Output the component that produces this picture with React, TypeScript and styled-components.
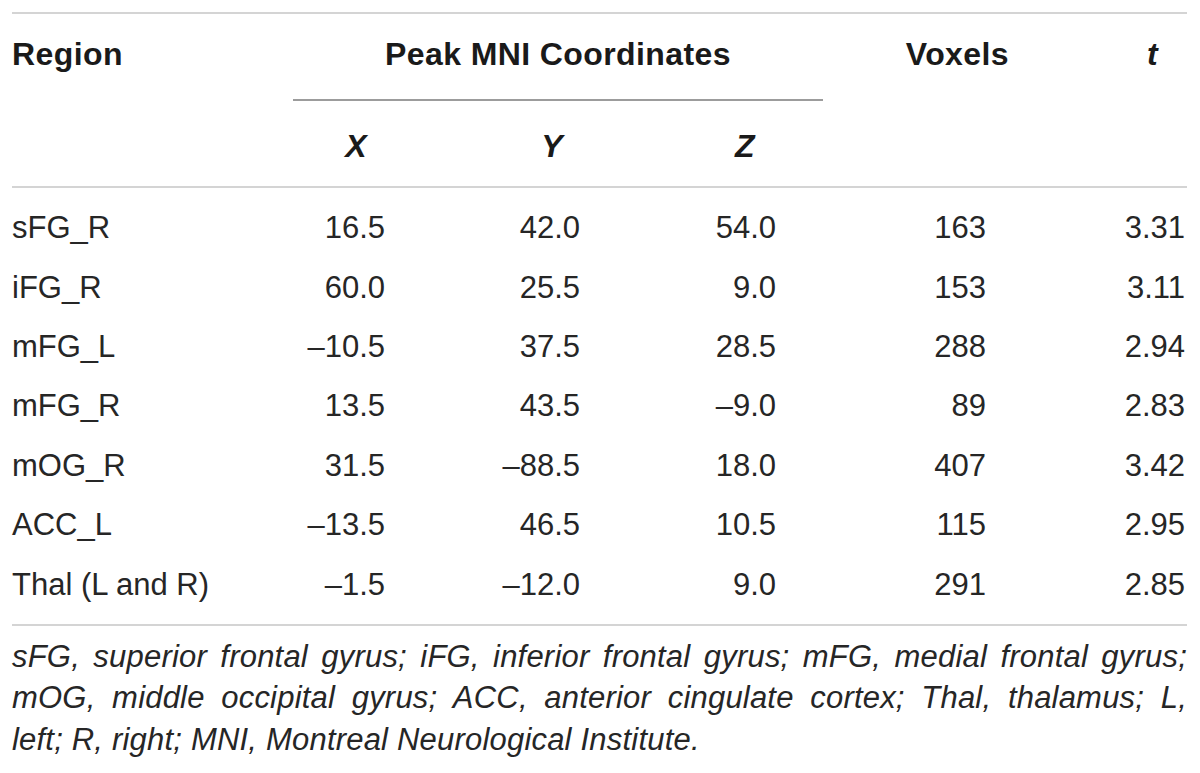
import React from "react";
import styled, { createGlobalStyle } from "styled-components";

const GlobalStyle = createGlobalStyle`
  html, body { margin: 0; padding: 0; background: #ffffff; }
  body {
    font-family: "Liberation Sans", Arial, Helvetica, sans-serif;
    color: #262626;
  }
`;

const COLS = "281px 177px 176px 177px 187px 177px";

const Page = styled.div`
  padding: 12px 0 0 12px;
  width: 1175px;
`;

const Table = styled.div`
  border-top: 2px solid #d4d4d4;
`;

const Head = styled.div`
  display: grid;
  grid-template-columns: ${COLS};
  grid-template-rows: 85px 2px 85px;
  border-bottom: 2px solid #d4d4d4;
`;

const HeadCell = styled.div<{
  $col: string;
  $row: number;
  $align?: "left" | "center" | "right";
  $pad?: number;
  $italic?: boolean;
}>`
  grid-column: ${(p) => p.$col};
  grid-row: ${(p) => p.$row};
  font-size: 32px;
  line-height: 32px;
  font-weight: 700;
  letter-spacing: 0.4px;
  font-style: ${(p) => (p.$italic ? "italic" : "normal")};
  color: #1a1a1a;
  text-align: ${(p) => p.$align || "left"};
  padding-top: ${(p) => (p.$row === 1 ? 24 : 29)}px;
  padding-right: ${(p) => p.$pad || 0}px;
  white-space: nowrap;
`;

const SpanRule = styled.div`
  grid-column: 2 / 5;
  grid-row: 2;
  background: #9c9c9c;
`;

const Body = styled.div`
  padding: 10px 0;
`;

const Row = styled.div`
  display: grid;
  grid-template-columns: ${COLS};
  height: 59.4px;
  align-items: center;
`;

const Cell = styled.div<{ $align?: "left" | "right"; $pad?: number }>`
  font-size: 31px;
  line-height: 31px;
  text-align: ${(p) => p.$align || "right"};
  padding-right: ${(p) => p.$pad || 0}px;
  white-space: nowrap;
  color: #262626;
`;

const Footnote = styled.div`
  border-top: 2px solid #d4d4d4;
  padding-top: 10px;
`;

const FootLine = styled.div<{ $justify?: boolean }>`
  font-size: 31px;
  line-height: 41.5px;
  font-style: italic;
  letter-spacing: 0.2px;
  color: #262626;
  text-align: ${(p) => (p.$justify ? "justify" : "left")};
  text-align-last: ${(p) => (p.$justify ? "justify" : "left")};
`;

const VALUE_PADS = [85, 66, 47, 24, 2];

const rows: string[][] = [
  ["sFG_R", "16.5", "42.0", "54.0", "163", "3.31"],
  ["iFG_R", "60.0", "25.5", "9.0", "153", "3.11"],
  ["mFG_L", "–10.5", "37.5", "28.5", "288", "2.94"],
  ["mFG_R", "13.5", "43.5", "–9.0", "89", "2.83"],
  ["mOG_R", "31.5", "–88.5", "18.0", "407", "3.42"],
  ["ACC_L", "–13.5", "46.5", "10.5", "115", "2.95"],
  ["Thal (L and R)", "–1.5", "–12.0", "9.0", "291", "2.85"],
];

const footLines = [
  "sFG, superior frontal gyrus; iFG, inferior frontal gyrus; mFG, medial frontal gyrus;",
  "mOG, middle occipital gyrus; ACC, anterior cingulate cortex; Thal, thalamus; L,",
  "left; R, right; MNI, Montreal Neurological Institute.",
];

export default function App() {
  return (
    <>
      <GlobalStyle />
      <Page>
        <Table>
          <Head>
            <HeadCell $col="1" $row={1}>
              Region
            </HeadCell>
            <HeadCell $col="2 / 5" $row={1} $align="center">
              Peak MNI Coordinates
            </HeadCell>
            <HeadCell $col="5" $row={1} $align="right" $pad={1}>
              Voxels
            </HeadCell>
            <HeadCell $col="6" $row={1} $align="right" $pad={29} $italic>
              t
            </HeadCell>
            <SpanRule />
            <HeadCell $col="2" $row={3} $align="right" $pad={103} $italic>
              X
            </HeadCell>
            <HeadCell $col="3" $row={3} $align="right" $pad={83} $italic>
              Y
            </HeadCell>
            <HeadCell $col="4" $row={3} $align="right" $pad={68} $italic>
              Z
            </HeadCell>
          </Head>
          <Body>
            {rows.map((r) => (
              <Row key={r[0]}>
                <Cell $align="left">{r[0]}</Cell>
                {r.slice(1).map((v, i) => (
                  <Cell key={i} $pad={VALUE_PADS[i]}>
                    {v}
                  </Cell>
                ))}
              </Row>
            ))}
          </Body>
          <Footnote>
            {footLines.map((line, i) => (
              <FootLine key={i} $justify={i < footLines.length - 1}>
                {line}
              </FootLine>
            ))}
          </Footnote>
        </Table>
      </Page>
    </>
  );
}
